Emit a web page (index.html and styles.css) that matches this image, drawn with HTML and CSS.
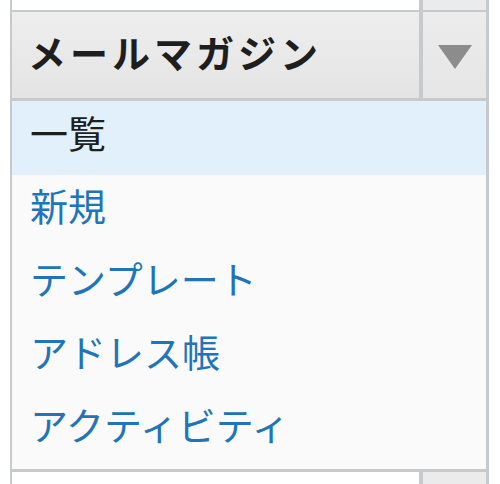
FILE: index.html
```html
<!DOCTYPE html>
<html lang="ja">
<head>
    <meta charset="UTF-8">
    <title>メールマガジン</title>
    <link rel="stylesheet" href="styles.css">
</head>
<body>
    <div class="menu-box">
        <div class="row stub">
            <div class="cell"></div>
            <div class="cell side"></div>
        </div>

        <div class="row menu-head">
            <div class="cell title">メールマガジン</div>
            <div class="cell side toggle">
                <svg width="34" height="24" viewBox="0 0 34 24">
                    <polygon points="0,0 34,0 17,24" fill="#8c8c8c"/>
                </svg>
            </div>
        </div>

        <ul class="submenu">
            <li class="current">一覧</li>
            <li><a href="#">新規</a></li>
            <li><a href="#">テンプレート</a></li>
            <li><a href="#">アドレス帳</a></li>
            <li><a href="#">アクティビティ</a></li>
        </ul>

        <div class="row stub">
            <div class="cell"></div>
            <div class="cell side"></div>
        </div>
    </div>
</body>
</html>
```

FILE: styles.css
```css
body {
    margin: 0;
    background-color: #fff;
    font-family: "Noto Sans CJK JP", "Noto Sans", sans-serif;
}
.menu-box {
    margin-left: 10px;
    width: 474px;
    border-left: 2px solid #c6cacd;
    border-right: 3px solid #c6cacd;
    background-color: #c6cacd;
    display: flex;
    flex-direction: column;
    gap: 2px;
    height: 484px;
    overflow: hidden;
}
.row {
    display: grid;
    grid-template-columns: 1fr 63px;
    column-gap: 4px;
}
.cell {
    background-color: #fff;
}
.side {
    background-color: #ebebeb;
}
.stub {
    height: 10px;
}
.stub:last-child {
    height: 12px;
    margin-top: 1px;
}
.menu-head {
    height: 87px;
    margin-bottom: 1px;
}
.title {
    background: linear-gradient(#eeeeee, #e4e4e4);
    font-size: 38px;
    font-weight: bold;
    color: #1e1e1e;
    letter-spacing: 4px;
    padding-left: 16px;
    line-height: 80px;
}
.toggle {
    background: linear-gradient(#ececec, #e6e6e6);
    display: flex;
    align-items: center;
    justify-content: center;
    padding-top: 3px;
}
.submenu {
    list-style: none;
    margin: 0;
    padding: 0 0 2px;
    background-color: #fafafa;
}
.submenu li {
    font-size: 38px;
    line-height: 44px;
    padding: 8px 18px 21px;
}
.submenu li.current {
    background-color: #e1f0fa;
    color: #1e1e1e;
    padding-top: 9px;
}
.submenu a {
    color: #2274b8;
    text-decoration: none;
}
```
